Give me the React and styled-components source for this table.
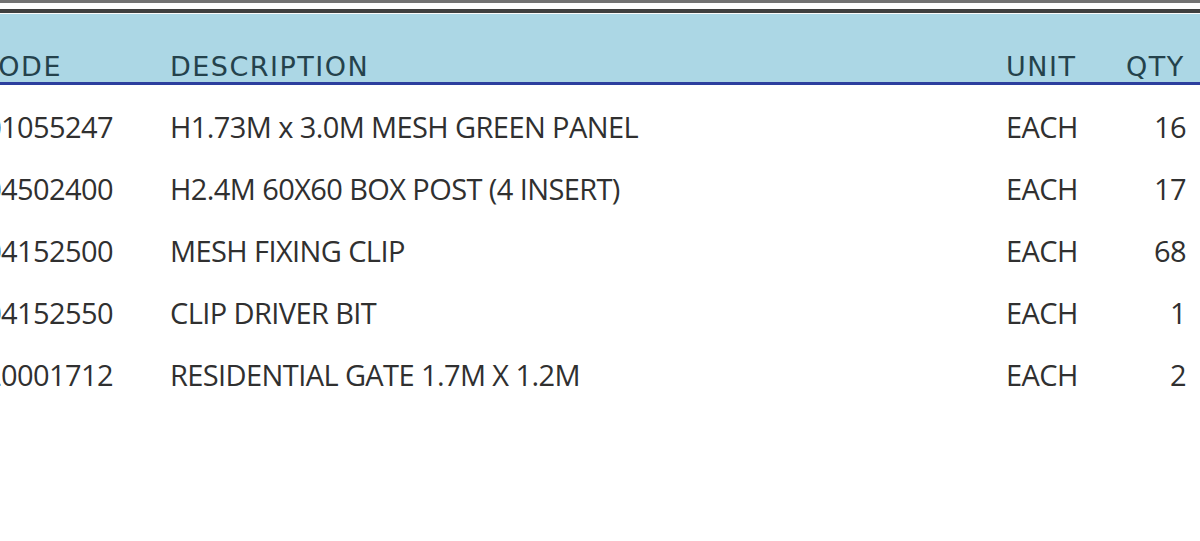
import * as React from 'react';
import styled, { createGlobalStyle } from 'styled-components';

const ITEMS = [
  { code: '01055247', description: 'H1.73M x 3.0M MESH GREEN PANEL', unit: 'EACH', qty: 16 },
  { code: '04502400', description: 'H2.4M 60X60 BOX POST (4 INSERT)', unit: 'EACH', qty: 17 },
  { code: '04152500', description: 'MESH FIXING CLIP', unit: 'EACH', qty: 68 },
  { code: '04152550', description: 'CLIP DRIVER BIT', unit: 'EACH', qty: 1 },
  { code: '20001712', description: 'RESIDENTIAL GATE 1.7M X 1.2M', unit: 'EACH', qty: 2 },
];

const GlobalStyle = createGlobalStyle`
  html, body {
    margin: 0;
    background: #ffffff;
  }
`;

const Page = styled.div`
  width: 1200px;
  height: 541px;
  overflow: hidden;
  background: #ffffff;
  border-top: 3px solid #737373;
  padding-top: 6px;
  box-sizing: border-box;
`;

const Sheet = styled.div`
  border-top: 4px solid #3f3f3f;
  padding-top: 1px;
  background: #fbfbfb;
`;

// the sheet is scrolled a little to the right, so the code column is cut at the left edge
const Table = styled.div`
  width: 1222px;
  margin-left: -22px;
  background: #ffffff;
`;

const Columns = styled.div`
  display: grid;
  grid-template-columns: 192px 836px 120px 74px;
`;

const HeaderRow = styled(Columns)`
  height: 71px;
  align-items: end;
  background: #acd7e5;
  border-bottom: 3px solid #2c3f9e;
  box-sizing: border-box;
  padding-bottom: 1px;
`;

const HeadCell = styled.div`
  font-family: "DejaVu Sans", Verdana, sans-serif;
  font-size: 27px;
  font-weight: 500;
  letter-spacing: 1.5px;
  line-height: 28px;
  color: #24424c;
  white-space: nowrap;
`;

const Body = styled.div`
  padding-top: 11px;
`;

const Row = styled(Columns)`
  height: 62px;
  align-items: center;
`;

const Cell = styled.div`
  font-family: "Open Sans", "Noto Sans", sans-serif;
  font-size: 29px;
  letter-spacing: -0.6px;
  line-height: 34px;
  color: #303030;
  white-space: nowrap;
  text-align: ${({ $align }) => $align || 'left'};
  padding-right: ${({ $pad }) => $pad || 0}px;
`;

const App = () => (
  <>
    <GlobalStyle />
    <Page>
      <Sheet>
        <Table>
          <HeaderRow>
            <HeadCell>CODE</HeadCell>
            <HeadCell>DESCRIPTION</HeadCell>
            <HeadCell>UNIT</HeadCell>
            <HeadCell>QTY</HeadCell>
          </HeaderRow>
          <Body>
            {ITEMS.map((item) => (
              <Row key={item.code}>
                <Cell $align="right" $pad={57}>{item.code}</Cell>
                <Cell>{item.description}</Cell>
                <Cell>{item.unit}</Cell>
                <Cell $align="right" $pad={14}>{item.qty}</Cell>
              </Row>
            ))}
          </Body>
        </Table>
      </Sheet>
    </Page>
  </>
);

export default App;
